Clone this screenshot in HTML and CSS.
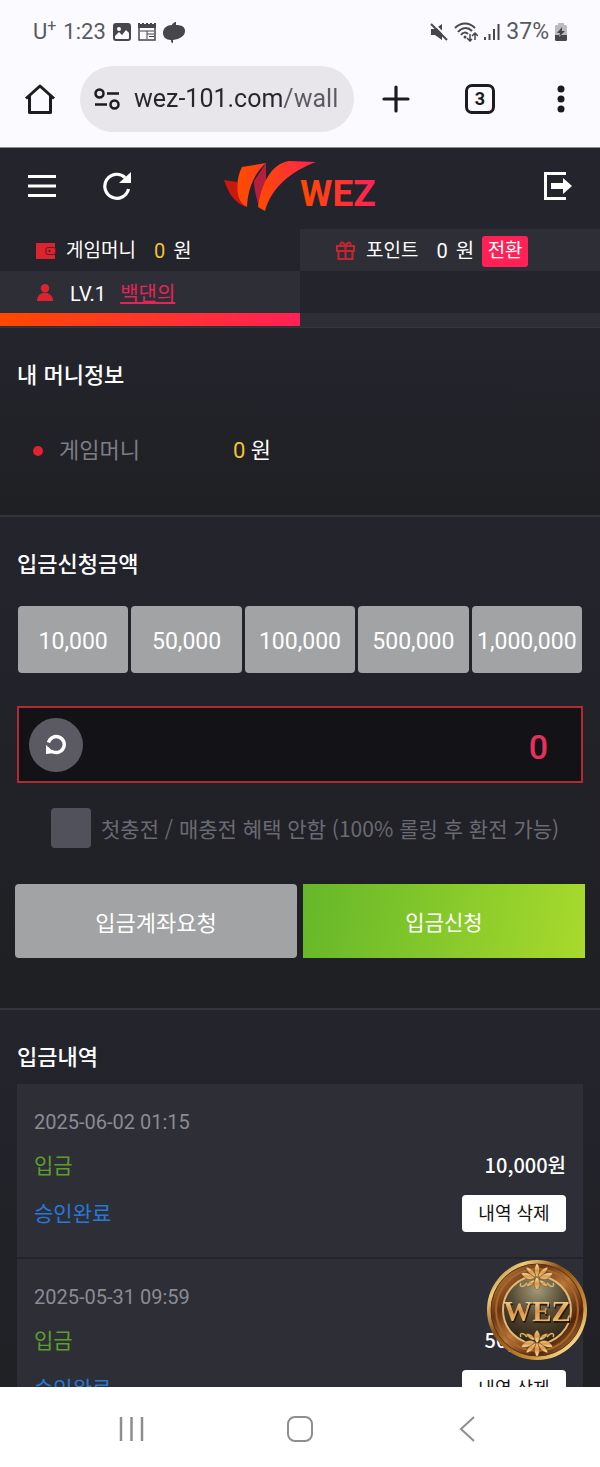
FILE: index.html
```html
<!DOCTYPE html>
<html lang="ko">
<head>
  <meta charset="UTF-8" />
  <meta name="viewport" content="width=device-width, initial-scale=1.0"/>
  <title>WEZ 입금신청</title>
  <link rel="stylesheet" href="styles.css">
</head>
<body>
  <div class="status-bar">
    <div class="status-left">
      <span class="carrier">U<sup>+</sup></span>
      <span class="time">1:23</span>
      <svg width="18" height="18" viewBox="0 0 18 18"><rect x="1" y="1" width="16" height="16" rx="2" fill="none" stroke="#47474a" stroke-width="2"/><path d="M1 1h16v10l-4-4-4 5-3-3-5 5z" fill="#47474a"/><circle cx="6" cy="6" r="2" fill="#fbfaff"/></svg>
      <svg width="18" height="18" viewBox="0 0 18 18"><path d="M1 2v15h16V2" fill="none" stroke="#47474a" stroke-width="1.5"/><path d="M0 0h2v1h2V0h2v1h2V0h2v1h2V0h2v1h2V0h2v5H0z" fill="#47474a"/><path d="M2 8h14M9 8v8M9 11h7M11 13.5h5" stroke="#47474a" fill="none"/></svg>
      <svg width="22" height="21" viewBox="0 0 22 21"><path d="M13 0v3c6 0 9 2 9 6 0 5-5 8-12 9v3c-2 0-2-2-2-3-5 0-8-3-8-7 0-5 4-8 9-8 0-1 2-3 4-3z" fill="#47474a"/></svg>
    </div>
    <div class="status-right">
      <svg width="18" height="18" viewBox="0 0 18 18"><path d="M1 6h4l7-5v16l-7-5H1z" fill="#47474a"/><path d="M3 0l15 15" stroke="#fbfaff" stroke-width="2"/><path d="M1 1l16 16" stroke="#47474a" stroke-width="2"/></svg>
      <svg width="24" height="20" viewBox="0 0 24 20"><g fill="none" stroke="#47474a" stroke-width="2"><path d="M1 6c6-6 14-6 20 0M4 10c4-5 10-5 14-1M7 13c2-3 5-3 7-1"/><path d="M16 12v7m-3-3l3 3 2-2M21 18v-7m-3 3l3-3 3 3" stroke-width="1.5"/></g><circle cx="11" cy="15" r="1.5" fill="#47474a"/></svg>
      <svg width="16" height="18" viewBox="0 0 16 18"><path d="M1 14v3M5.5 11v6M10 6v11M14.5 1v16" stroke="#47474a" stroke-width="2" fill="none"/></svg>
      <span>37%</span>
      <svg width="12" height="18" viewBox="0 0 12 18"><path d="M3 0h6v2h2l1 1v14l-1 1H1l-1-1V3l1-1h2z" fill="#bbbbc0"/><path d="M0 12h12v5l-1 1H1l-1-1zM7 4l-5 6h3l-1 4 6-6H7z" fill="#47474a"/></svg>
    </div>
  </div>

  <div class="toolbar">
    <button class="tool home" aria-label="홈">
      <svg width="30" height="30" viewBox="0 0 30 30"><path d="M1 14.5L15 2l14 12.5M4.500 12v16.500h21V12" fill="none" stroke="#1b1b20" stroke-width="3" stroke-linejoin="round"/></svg>
    </button>
    <div class="omnibox">
      <svg width="26" height="22" viewBox="0 0 26 22"><g fill="none" stroke="#1b1b20" stroke-width="2.5"><circle cx="5.5" cy="5.5" r="4"/><circle cx="20.5" cy="16.5" r="4"/><path d="M13 5.500h12M1 16.500h12"/></g></svg>
      <input type="text" value="wez-101.com/wall" aria-label="주소">
    </div>
    <button class="tool" aria-label="새 탭">
      <svg width="28" height="28" viewBox="0 0 28 28"><path d="M14 2v24M2 14h24" stroke="#1b1b20" stroke-width="3.2" stroke-linecap="round"/></svg>
    </button>
    <button class="tool" aria-label="탭 목록"><span class="tab-count">3</span></button>
    <button class="tool more" aria-label="더보기">
      <svg width="8" height="28" viewBox="0 0 8 28"><g fill="#1b1b20"><circle cx="4" cy="4" r="3.5"/><circle cx="4" cy="14" r="3.5"/><circle cx="4" cy="24" r="3.5"/></g></svg>
    </button>
  </div>

  <div class="page">
    <main class="content">
      <header class="header">
        <div class="header-left">
          <button aria-label="메뉴"><svg width="28" height="28" viewBox="0 0 28 28"><path d="M0 4.500h28M0 14h28M0 23.500h28" stroke="#fff" stroke-width="3"/></svg></button>
          <button aria-label="새로고침"><svg width="28" height="28" viewBox="0 0 28 28"><path d="M22 5.500A12 12 0 1 0 25.500 17" fill="none" stroke="#fff" stroke-width="3.2"/><path d="M28 0v11H16z" fill="#fff"/></svg></button>
        </div>
        <a href="#" class="logo" aria-label="WEZ">
          <svg width="154" height="51" viewBox="0 0 154 51">
            <defs>
              <linearGradient id="wing" x1="0" x2="1"><stop offset="0" stop-color="#ff4a00"/><stop offset="1" stop-color="#ff2158"/></linearGradient>
              <linearGradient id="orange" x1="0" x2="1"><stop offset="0" stop-color="#ff4c00"/><stop offset="1" stop-color="#ff3c1d"/></linearGradient>
            </defs>
            <path d="M1 20l13 2c0 10 3 19 9 25C11 42 6 34 1 20z" fill="#c9180d"/>
            <path d="M31 21L43 3v20l-7 24c-2-8-5-17-5-26z" fill="#b51f3e"/>
            <path d="M19 7L43 3C31 14 25 28 24 47 12 42 12 20 19 7z" fill="url(#orange)"/>
            <path d="M35 47C38 26 47 4 66 1l27 1C68 11 48 28 42 51z" fill="url(#wing)"/>
            <text x="77" y="46" fill="url(#wing)" class="logo-text">WEZ</text>
          </svg>
        </a>
        <button class="logout" aria-label="로그아웃"><svg width="28" height="28" viewBox="0 0 28 28"><path d="M22 1.500H1.500v25H22" fill="none" stroke="#fff" stroke-width="3"/><path d="M7 11h12V6l9 8-9 8v-5H7z" fill="#fff"/></svg></button>
      </header>

      <div class="stats">
        <div class="stat">
          <svg width="20" height="18" viewBox="0 0 20 18"><path d="M0 1h19v5h-7c-3 0-3 7 0 7h7v4H0z" fill="#dc2430"/><rect x="10" y="5.5" width="9.5" height="7" rx="2" fill="#dc2430" stroke="#6b1b25"/><circle cx="13.5" cy="9" r="1" fill="#24242c"/></svg>
          <span class="label">게임머니</span><span class="num gold">0</span><span>원</span>
        </div>
        <div class="stat raised">
          <svg width="20" height="20" viewBox="0 0 20 20"><path d="M1 5h17v5H1zM2.500 10v8h14v-8M9.500 5v13M9.500 5C7 0 3 1 5 5M9.500 5c2.500-5 6.500-4 4.500 0" fill="none" stroke="#c8242f" stroke-width="2"/></svg>
          <span class="label">포인트</span><span class="num">0</span><span>원</span>
          <button class="convert">전환</button>
        </div>
        <div class="stat raised user">
          <svg width="20" height="20" viewBox="0 0 20 20"><circle cx="9" cy="4.2" r="4.2" fill="#dc2430"/><path d="M1 17c0-11 16-11 16 0z" fill="#dc2430"/></svg>
          <span class="level">LV.1</span><a href="#">백댄의</a>
        </div>
        <div class="stat"></div>
      </div>
      <div class="progress"><div class="progress-fill"></div></div>

      <section class="section">
        <h2>내 머니정보</h2>
        <dl class="money">
          <dt>게임머니</dt>
          <dd><span class="num gold">0</span> 원</dd>
        </dl>
      </section>

      <section class="section">
        <h2>입금신청금액</h2>
        <form>
          <div class="amounts">
            <button type="button">10,000</button>
            <button type="button">50,000</button>
            <button type="button">100,000</button>
            <button type="button">500,000</button>
            <button type="button">1,000,000</button>
          </div>
          <div class="amount-box">
            <button type="reset" aria-label="초기화"><svg width="22" height="22" viewBox="0 0 22 22"><path d="M3.500 8.500A8 8 0 1 1 6.500 17" fill="none" stroke="#fff" stroke-width="3.4"/><path d="M1 11v9l9-1z" fill="#fff"/></svg></button>
            <input type="text" value="0" aria-label="입금신청금액">
          </div>
          <label class="bonus"><input type="checkbox"> 첫충전 / 매충전 혜택 안함 (100% 롤링 후 환전 가능)</label>
          <div class="actions">
            <button type="button" class="request">입금계좌요청</button>
            <button type="button" class="submit">입금신청</button>
          </div>
        </form>
      </section>

      <section class="section">
        <h2>입금내역</h2>
        <ul class="history">
          <li>
            <div class="date">2025-06-02 01:15</div>
            <div class="row"><span class="type">입금</span><span class="price">10,000원</span></div>
            <div class="row"><span class="state">승인완료</span><button>내역 삭제</button></div>
          </li>
          <li>
            <div class="date">2025-05-31 09:59</div>
            <div class="row"><span class="type">입금</span><span class="price">50,000원</span></div>
            <div class="row"><span class="state">승인완료</span><button>내역 삭제</button></div>
          </li>
        </ul>
      </section>
    </main>

    <button class="coin" aria-label="WEZ">
      <svg width="100" height="100" viewBox="0 0 100 100">
        <defs>
          <linearGradient id="rim" x1="0" y1="0" x2="1" y2="1"><stop offset="0" stop-color="#7d4a16"/><stop offset=".2" stop-color="#f0cb7a"/><stop offset=".4" stop-color="#8a4e1a"/><stop offset=".7" stop-color="#c98a35"/><stop offset=".85" stop-color="#f3d488"/><stop offset="1" stop-color="#7d4a16"/></linearGradient>
          <linearGradient id="ring" x1="0" y1="0" x2="1" y2="1"><stop offset="0" stop-color="#d59a4e"/><stop offset=".3" stop-color="#6b3412"/><stop offset=".5" stop-color="#b87838"/><stop offset=".75" stop-color="#522409"/><stop offset="1" stop-color="#e0aa58"/></linearGradient>
          <radialGradient id="face" cx=".5" cy=".2" r=".8"><stop offset="0" stop-color="#a39a78"/><stop offset=".5" stop-color="#544a34"/><stop offset="1" stop-color="#2e2114"/></radialGradient>
          <linearGradient id="gold" x1="0" y1="0" x2="0" y2="1"><stop offset="0" stop-color="#fff0bd"/><stop offset=".5" stop-color="#d9954a"/><stop offset="1" stop-color="#f3cf83"/></linearGradient>
          <g id="leaf" fill="url(#gold)" stroke="#6d4216" stroke-width=".5">
            <path d="M50 3c3 4 4 9 0 15-4-6-3-11 0-15z"/>
            <path d="M49 17c-5-1-9-5-10-10 5 1 9 4 10 10zM51 17c5-1 9-5 10-10-5 1-9 4-10 10z"/>
            <path d="M48 18c-6 3-11 1-14-5 6-1 11 1 14 5zM52 18c6 3 11 1 14-5-6-1-11 1-14 5z"/>
            <path d="M50 17c4 4 4 9 0 13-4-4-4-9 0-13z"/>
            <path d="M48 20c-2 5-5 7-9 6 2-4 5-6 9-6zM52 20c2 5 5 7 9 6-2-4-5-6-9-6z"/>
            <path d="M40 23c-5 6-8 3-6 0M60 23c5 6 8 3 6 0" fill="none" stroke="#d8b36a" stroke-width="1.5"/>
          </g>
        </defs>
        <circle cx="50" cy="50" r="50" fill="url(#rim)"/>
        <circle cx="50" cy="50" r="46" fill="url(#ring)" stroke="#5b3010" stroke-width="1"/>
        <circle cx="50" cy="50" r="41" fill="none" stroke="#a9652a" stroke-width="2"/>
        <circle cx="50" cy="50" r="34" fill="url(#face)" stroke="#dfb777" stroke-width="2"/>
        <use href="#leaf"/>
        <use href="#leaf" transform="rotate(180 50 50)"/>
        <text x="50" y="61" text-anchor="middle" class="coin-text" fill="url(#gold)">WEZ</text>
      </svg>
    </button>
  </div>

  <nav class="navbar">
    <button aria-label="최근 앱"><svg width="26" height="26" viewBox="0 0 26 26"><path d="M2 1v24M12.500 1v24M23 1v24" stroke="#8e8e8e" stroke-width="2.5"/></svg></button>
    <button aria-label="홈"><svg width="26" height="26" viewBox="0 0 26 26"><rect x="1" y="1" width="24" height="24" rx="7" fill="none" stroke="#8e8e8e" stroke-width="2"/></svg></button>
    <button aria-label="뒤로"><svg width="26" height="26" viewBox="0 0 26 26"><path d="M19 1L6 13l13 12" fill="none" stroke="#8e8e8e" stroke-width="2"/></svg></button>
  </nav>
</body>
</html>
```

FILE: styles.css
```css
* {
  box-sizing: border-box;
}

body {
  margin: 0;
  height: 100vh;
  display: flex;
  flex-direction: column;
  font-family: Roboto, 'Noto Sans CJK KR', sans-serif;
  background-color: #fbfaff;
  color: #fff;
}

button {
  border: none;
  background: none;
  padding: 0;
  font-family: inherit;
  color: inherit;
  cursor: pointer;
}

svg {
  display: block;
}

h2, dl, dd, ul {
  margin: 0;
  padding: 0;
}

/* phone status bar */
.status-bar {
  height: 64px;
  flex: none;
  display: flex;
  align-items: center;
  justify-content: space-between;
  padding: 0 33px;
  font-size: 22px;
  line-height: 26px;
  color: #5a5a5e;
}

.status-left {
  display: flex;
  align-items: center;
  gap: 7px;
}

.carrier sup {
  font-size: 16px;
  line-height: 0;
}

.status-right {
  display: flex;
  align-items: center;
  gap: 6px;
}

.status-right span {
  font-size: 23px;
}

/* browser toolbar */
.toolbar {
  height: 84px;
  flex: none;
  display: flex;
  align-items: center;
  padding-bottom: 14px;
  border-bottom: 1px solid #8b8b92;
}

.tool {
  width: 84px;
  height: 66px;
  display: flex;
  align-items: center;
  justify-content: center;
}

.tool.home {
  width: 80px;
}

.tool.more {
  width: 78px;
}

.omnibox {
  flex: 1;
  min-width: 0;
  height: 66px;
  display: flex;
  align-items: center;
  gap: 14px;
  padding: 0 14px;
  border-radius: 33px;
  background-color: #e8e6eb;
}

.omnibox svg {
  flex: none;
}

.omnibox input {
  flex: 1;
  min-width: 0;
  border: none;
  padding: 0;
  font-family: Roboto, sans-serif;
  font-size: 25px;
  line-height: 32px;
  background: linear-gradient(to right, #26262b 147px, #5c5b62 149px);
  -webkit-background-clip: text;
  background-clip: text;
  color: transparent;
}

.tab-count {
  width: 30px;
  height: 30px;
  border: 3px solid #1b1b20;
  border-radius: 7px;
  font-size: 18px;
  font-weight: 700;
  line-height: 24px;
  text-align: center;
  color: #1b1b20;
}

/* site */
.page {
  flex: 1;
  min-height: 0;
  position: relative;
  overflow: hidden;
  background-color: #24242c;
}

.content {
  height: 100%;
  overflow: hidden;
}

.header {
  height: 81px;
  display: grid;
  grid-template-columns: 1fr auto 1fr;
  align-items: center;
  padding: 0 28px 6px;
}

.header-left {
  display: flex;
  gap: 47px;
}

.logout {
  justify-self: end;
}

.logo-text {
  font-family: Roboto, sans-serif;
  font-size: 37px;
  font-weight: 700;
}

.stats {
  display: grid;
  grid-template-columns: 1fr 1fr;
}

.stat {
  height: 42px;
  display: flex;
  align-items: center;
  padding: 2px 0 0 36px;
  font-size: 20px;
  line-height: 30px;
}

.stat svg {
  margin-right: 10px;
}

.stat .label {
  margin-right: 18px;
  font-size: 19px;
}

.stat .num {
  margin-right: 8px;
}

.stat.raised {
  background-color: #2e2e36;
}

.stat.user {
  padding-top: 4px;
}

.stat.user svg {
  margin-right: 14px;
}

.stat .level {
  margin-right: 14px;
}

.stat a {
  color: #e0265a;
}

.gold {
  color: #f3c332;
}

.convert {
  margin-left: 8px;
  width: 46px;
  height: 31px;
  border-radius: 3px;
  background-color: #ff2156;
  font-size: 19px;
  line-height: 30px;
}

.progress {
  height: 15px;
  padding-bottom: 1px;
  background-color: #2e2e36;
  border-bottom: 1px solid #35363d;
}

.progress-fill {
  width: 50%;
  height: 100%;
  background: linear-gradient(to right, #ff4800, #ff2156);
}

.section {
  padding: 30px 17px 0;
  background: linear-gradient(#24242d, #1f2023);
  border-bottom: 2px solid #33343a;
}

.section h2 {
  font-family: 'Noto Sans CJK KR', sans-serif;
  font-size: 22px;
  font-weight: 500;
  line-height: 30px;
}

.money {
  display: flex;
  align-items: center;
  padding: 48px 16px 49px;
  font-size: 22px;
  line-height: 30px;
}

.money dt {
  width: 200px;
  display: flex;
  align-items: center;
  gap: 16px;
  color: #7d7d86;
}

.money dt::before {
  content: '';
  width: 10px;
  height: 10px;
  border-radius: 50%;
  background-color: #e0242f;
}

.amounts {
  display: grid;
  grid-template-columns: repeat(5, 1fr);
  gap: 3px;
  margin: 29px 1px 33px;
}

.amounts button {
  height: 67px;
  padding-top: 3px;
  border-radius: 4px;
  background-color: #a2a3a5;
  font-size: 23px;
}

.amount-box {
  height: 77px;
  display: flex;
  align-items: center;
  padding: 0 33px 0 10px;
  border: 2px solid #b02a31;
  background-color: #131217;
}

.amount-box button {
  width: 54px;
  height: 54px;
  flex: none;
  display: flex;
  align-items: center;
  justify-content: center;
  border-radius: 50%;
  background-color: #5b5a63;
}

.amount-box input {
  flex: 1;
  min-width: 0;
  border: none;
  padding: 4px 0 0;
  background: none;
  font-family: Roboto, sans-serif;
  font-size: 34px;
  font-weight: 500;
  text-align: right;
  color: #e8305f;
}

.bonus {
  display: flex;
  align-items: center;
  gap: 10px;
  margin: 25px 0 36px 34px;
  font-family: 'Noto Sans CJK KR', sans-serif;
  font-size: 21px;
  line-height: 30px;
  color: #6a6a73;
}

.bonus input {
  appearance: none;
  width: 40px;
  height: 40px;
  flex: none;
  margin: 0;
  border-radius: 4px;
  background-color: #51515b;
}

.actions {
  display: grid;
  grid-template-columns: 1fr 1fr;
  gap: 6px;
  margin: 0 -2px;
  padding-bottom: 50px;
}

.actions button {
  height: 74px;
  font-size: 22px;
}

.actions .request {
  border-radius: 4px;
  background-color: #a2a3a5;
}

.actions .submit {
  background: linear-gradient(100deg, #65b72a, #a8da2c);
  font-size: 21px;
}

.history {
  margin-top: 14px;
  list-style: none;
}

.history li {
  padding: 23px 17px 25px;
  border-bottom: 2px solid #24242d;
  background-color: #2e2e36;
}

.date {
  font-size: 20px;
  line-height: 30px;
  color: #8b8b94;
}

.row {
  display: flex;
  align-items: center;
  justify-content: space-between;
  margin-top: 14px;
  font-family: 'Noto Sans CJK KR', sans-serif;
  font-size: 21px;
}

.row span {
  padding-bottom: 4px;
  line-height: 26px;
}

.row .type {
  color: #5c9e2c;
}

.row .state {
  color: #2878d8;
}

.row .price {
  padding-bottom: 2px;
  font-size: 20px;
  font-weight: 500;
  line-height: 28px;
}

.row button {
  width: 104px;
  height: 37px;
  padding-bottom: 4px;
  border-radius: 4px;
  background-color: #fff;
  color: #111;
  font-size: 18px;
}

.coin {
  position: absolute;
  right: 13px;
  bottom: 27px;
}

.coin-text {
  font-family: 'Liberation Serif', serif;
  font-size: 29px;
  font-weight: 700;
  filter: drop-shadow(1px 2px 0 #2b1808);
}

/* phone navigation */
.navbar {
  height: 80px;
  flex: none;
  display: flex;
  justify-content: center;
  padding-top: 3px;
  background-color: #fff;
}

.navbar button {
  width: 28%;
  display: flex;
  align-items: center;
  justify-content: center;
}
```
